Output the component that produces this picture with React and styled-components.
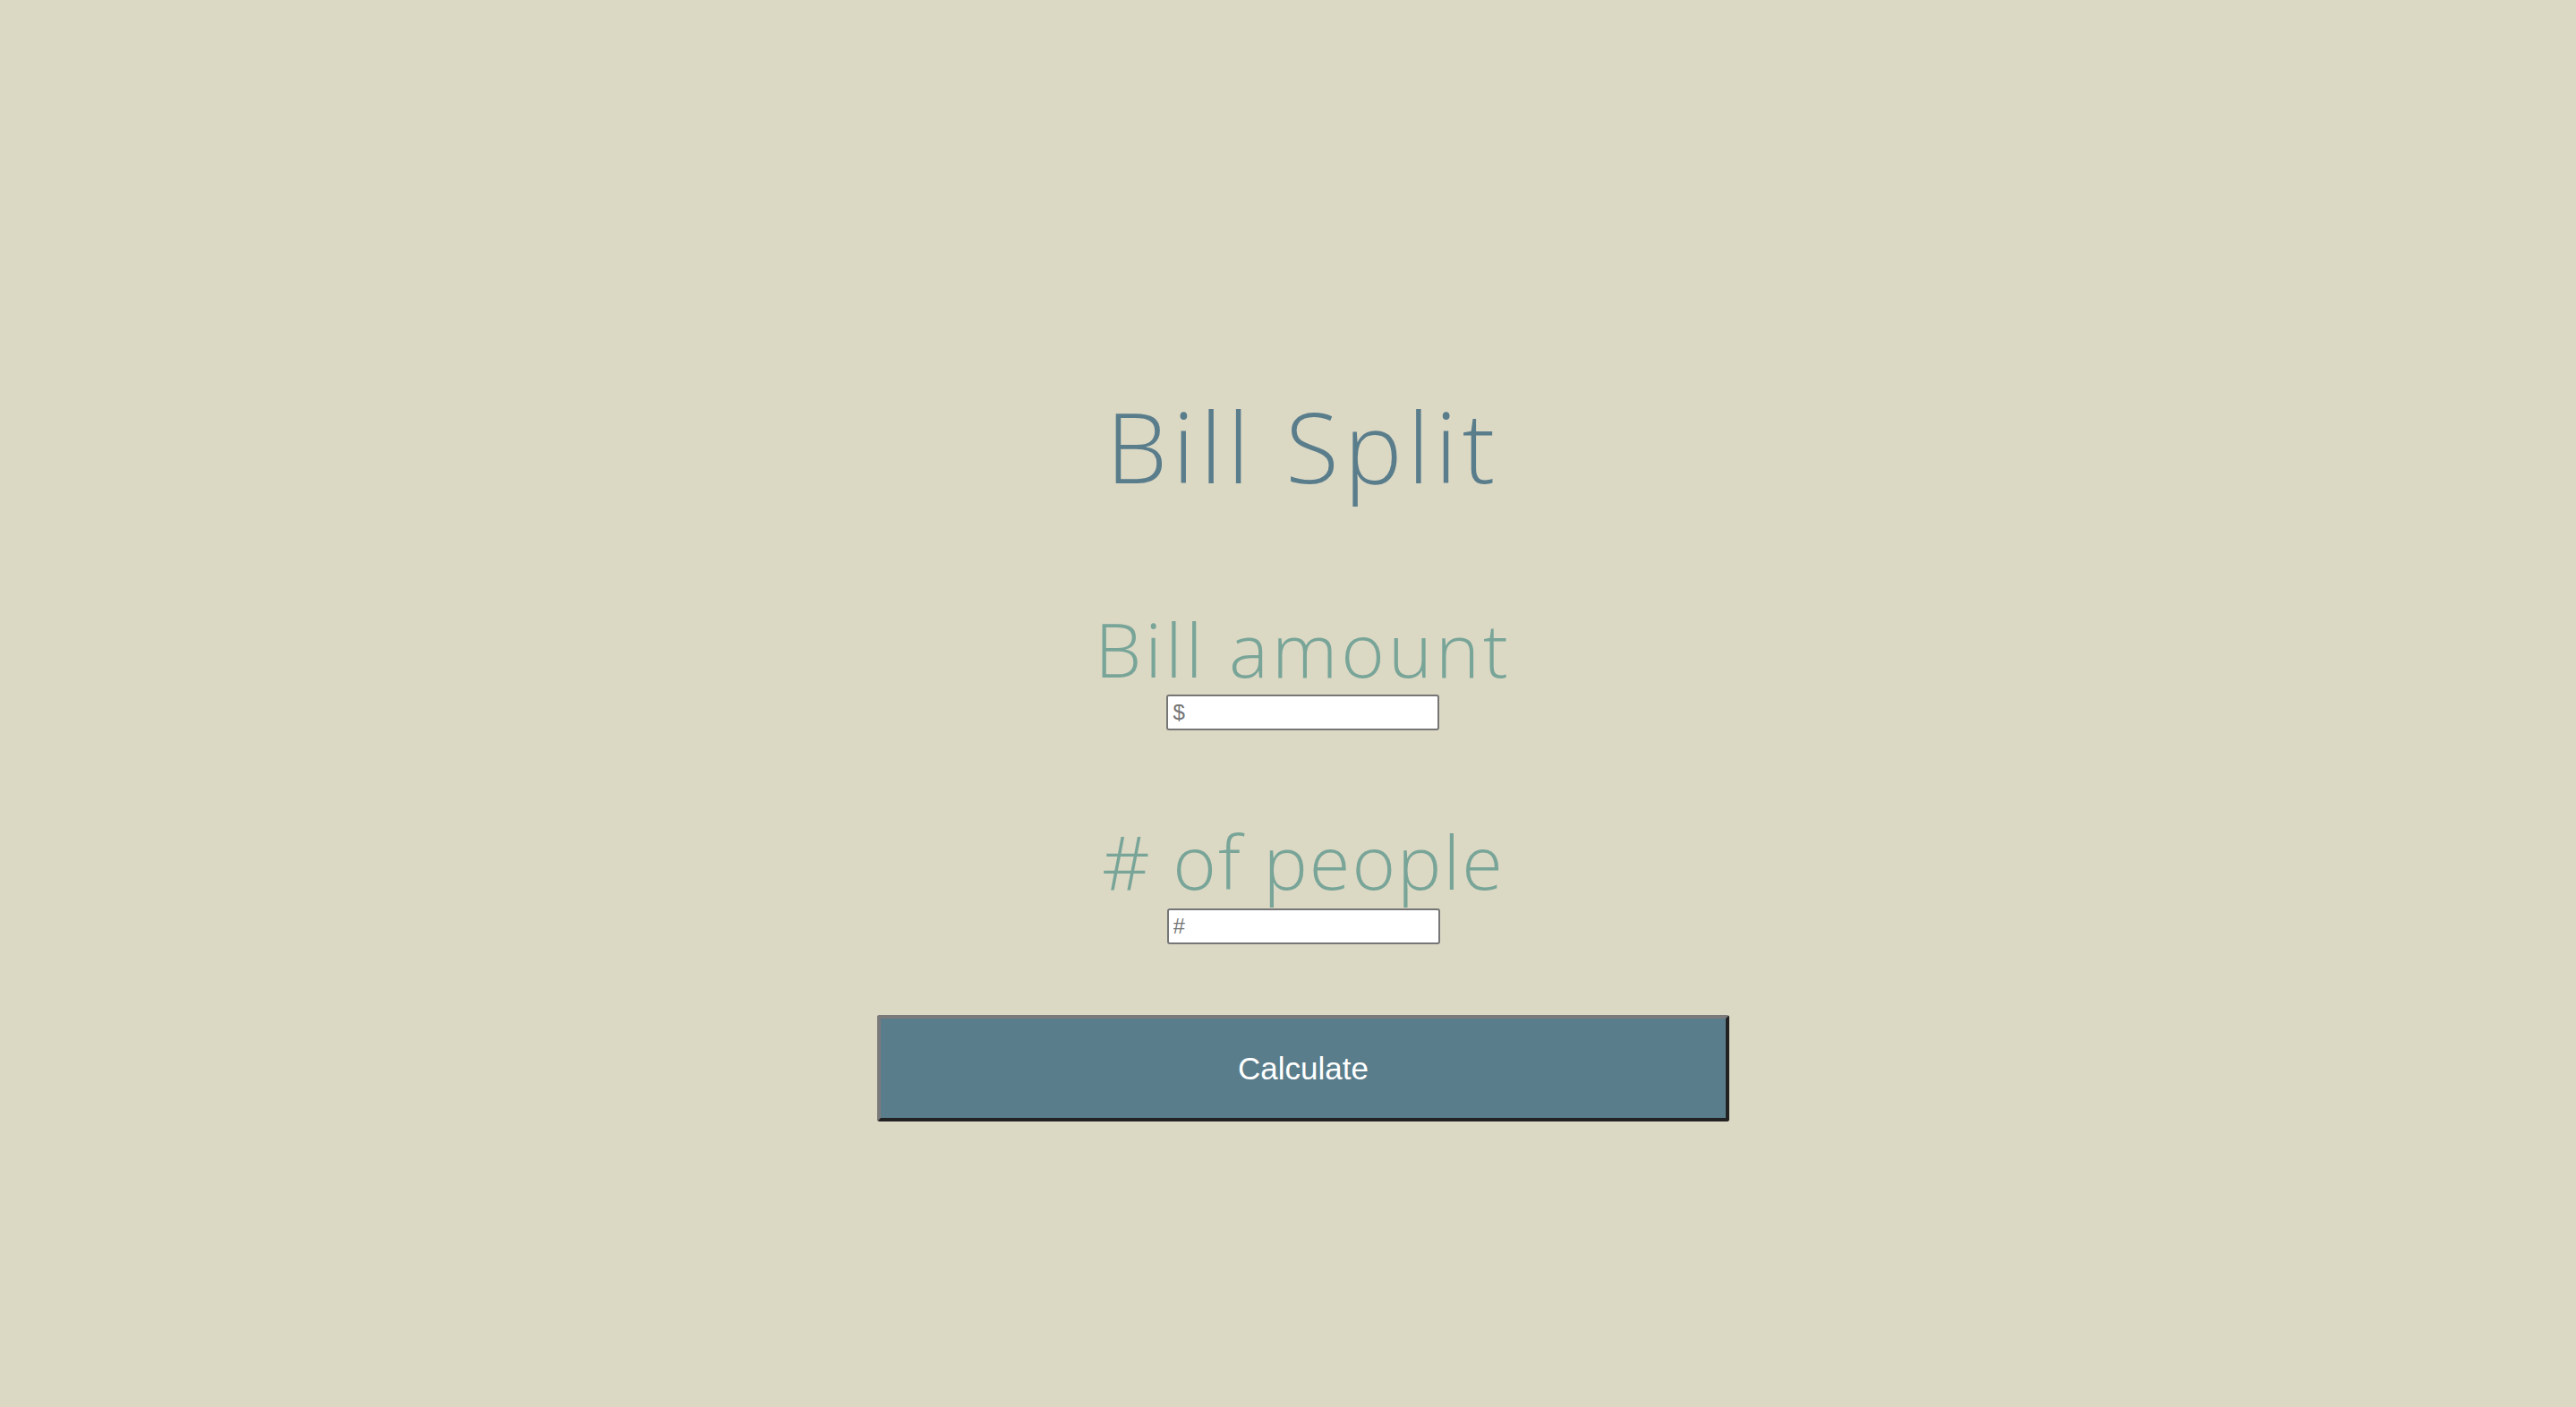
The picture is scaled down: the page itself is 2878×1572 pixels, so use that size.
import React from "react";
import styled, { createGlobalStyle } from "styled-components";

const GlobalStyle = createGlobalStyle`
  html, body {
    margin: 0;
    padding: 0;
    background-color: #dbd8c4;
  }
`;

const Page = styled.main`
  min-height: 100vh;
  box-sizing: border-box;
  display: flex;
  flex-direction: column;
  align-items: center;
  padding-top: 443px;
  padding-left: 34px;
`;

const Title = styled.h1`
  margin: 0;
  font-family: "Open Sans", "Liberation Sans", sans-serif;
  font-size: 109px;
  font-weight: 300;
  line-height: 1;
  letter-spacing: 6px;
  color: #5a7d8c;
`;

const Field = styled.div`
  display: flex;
  flex-direction: column;
  align-items: center;
  margin-top: ${(p) => p.$top}px;
`;

const Label = styled.label`
  font-family: "Open Sans", "Liberation Sans", sans-serif;
  font-size: 83px;
  font-weight: 300;
  line-height: 1;
  letter-spacing: ${(p) => p.$spacing}px;
  color: #78a598;
  margin-bottom: ${(p) => p.$gap}px;
`;

const Input = styled.input`
  box-sizing: border-box;
  width: 305px;
  height: 40px;
  padding: 0 5px;
  border: 2px solid #767676;
  border-radius: 3px;
  background: #ffffff;
  font-family: "Liberation Sans", Arial, sans-serif;
  font-size: 24px;
  color: #333;

  &::placeholder {
    color: #757575;
  }
`;

const Button = styled.button`
  box-sizing: border-box;
  width: 952px;
  height: 119px;
  margin-top: 79px;
  border-width: 4px;
  border-style: solid;
  border-color: #7a7a7a #222222 #222222 #7a7a7a;
  border-radius: 3px;
  background-color: #5a7d8b;
  color: #ffffff;
  font-family: "Liberation Sans", Arial, sans-serif;
  font-size: 35px;
  cursor: pointer;
`;

function App() {
  return (
    <>
      <GlobalStyle />
      <Page>
        <Title>Bill Split</Title>
        <Field $top={131}>
          <Label htmlFor="bill" $gap={10} $spacing={4}>Bill amount</Label>
          <Input type="text" id="bill" name="bill" placeholder="$" />
        </Field>
        <Field $top={104}>
          <Label htmlFor="people" $gap={12} $spacing={2}># of people</Label>
          <Input type="text" id="people" name="people" placeholder="#" />
        </Field>
        <Button type="button">Calculate</Button>
      </Page>
    </>
  );
}

export default App;
